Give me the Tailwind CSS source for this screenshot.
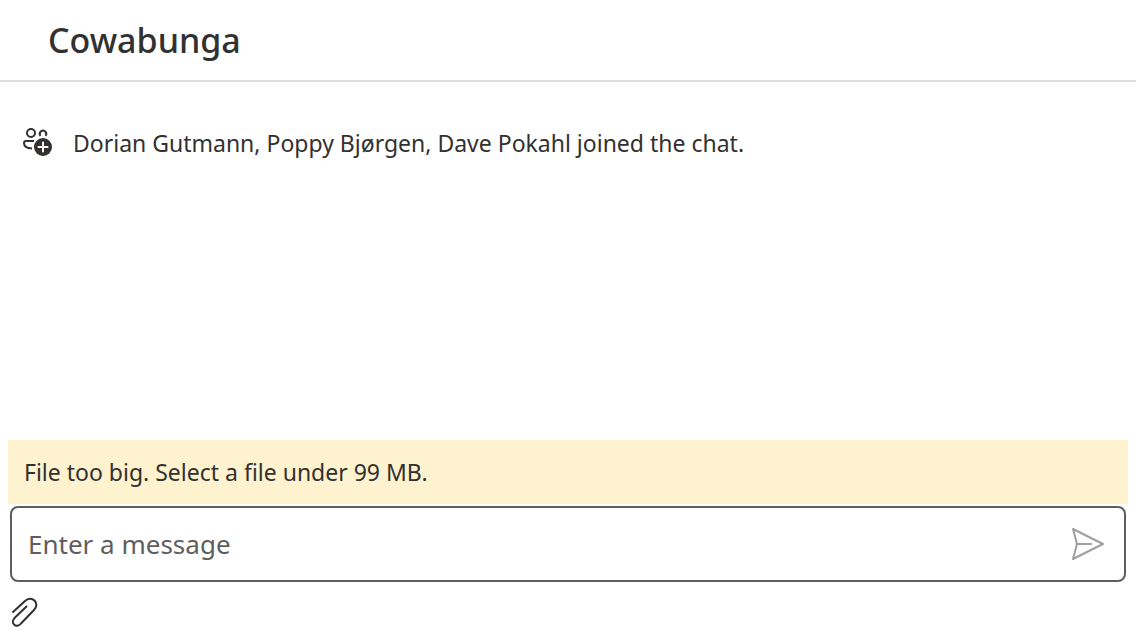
<!DOCTYPE html>
<html lang="en">
<head>
<meta charset="utf-8">
<meta name="viewport" content="width=device-width, initial-scale=1">
<title>Cowabunga</title>
<script src="https://cdn.jsdelivr.net/npm/@tailwindcss/browser@4"></script>
</head>
<body class="flex h-screen flex-col bg-white font-['Noto_Sans',sans-serif] text-[#323130]">
<header class="border-b-2 border-[#dddddd] px-12 py-4">
<h1 class="text-[34px] leading-12 font-medium">Cowabunga</h1>
</header>
<main class="flex-1 px-5 pt-[42px]">
<div class="flex items-start gap-[17px]">
<svg class="size-9 shrink-0" viewBox="20 124 36 36" fill="none" stroke="currentColor" stroke-width="2" aria-hidden="true">
<circle cx="31" cy="133" r="4"/>
<path d="M40.500 135.800a3.200 3.200 0 1 1 5 0"/>
<path d="M34 141h-8a2 2 0 0 0-2 2c0 3.200 2.500 5.200 8 5.500"/>
<circle cx="43" cy="147" r="9" fill="currentColor" stroke="none"/>
<path d="M43 142.500v9M38.500 147h9" stroke="white" stroke-linecap="round"/>
</svg>
<p class="text-[23px] leading-[38px]">Dorian Gutmann, Poppy Bjørgen, Dave Pokahl joined the chat.</p>
</div>
</main>
<footer class="px-2 pb-2.5">
<p role="alert" class="bg-[#fff2ce] px-4 py-3 text-[23px] leading-10">File too big. Select a file under 99 MB.</p>
<form class="mx-0.5 mt-0.5 flex items-center rounded-lg border-2 border-[#5f5e5c] px-4">
<input type="text" aria-label="Enter a message" placeholder="Enter a message" class="h-18 min-w-0 flex-1 bg-transparent text-[26px] outline-none placeholder:text-[#605e5c]">
<button type="button" aria-label="Send message" class="text-[#a19f9d]">
<svg class="size-10" viewBox="1068 524 40 40" fill="none" stroke="currentColor" stroke-width="2" stroke-linejoin="round" stroke-linecap="round"><path d="M1073 529L1103 544L1073 559L1077 544ZM1077 544H1091"/></svg>
</button>
</form>
<button type="button" aria-label="Attach file" class="mt-3 block">
<svg class="size-9" viewBox="8 594 36 36" fill="none" stroke="currentColor" stroke-width="2" stroke-linecap="round" stroke-linejoin="round"><path d="M13 612L25 601C28 598 32 598 34.500 600.500C37 603 37 607 34 610L21 623.500C19 626 16 626.500 14 624.500C12 622.500 13 619.500 15 617.500L26.500 606.500"/></svg>
</button>
</footer>
</body>
</html>
